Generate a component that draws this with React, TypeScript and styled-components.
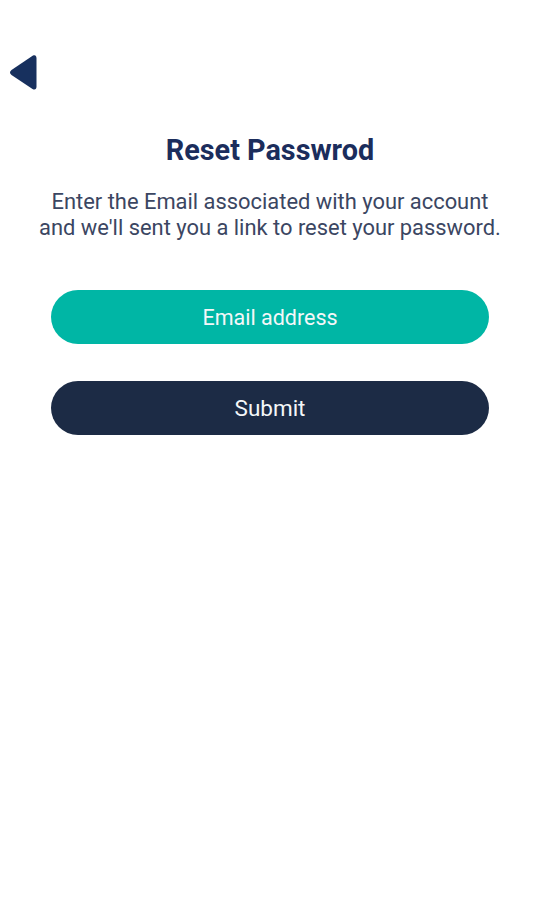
import React from 'react'
import styled, { createGlobalStyle } from 'styled-components'

const GlobalStyle = createGlobalStyle`
  body {
    margin: 0;
    background: #ffffff;
    font-family: Roboto, "Liberation Sans", sans-serif;
  }
`

const Screen = styled.div`
  width: 541px;
  min-height: 900px;
  display: flex;
  flex-direction: column;
`

const TopBar = styled.div`
  padding: 54px 0 0 9px;
  height: 38px;
`

const BackButton = styled.button`
  border: none;
  background: none;
  padding: 0;
  cursor: pointer;
  display: block;
`

const Content = styled.div`
  display: flex;
  flex-direction: column;
  align-items: center;
  padding: 40px 52px 0 51px;
`

const Title = styled.h1`
  margin: 0;
  font-size: 28.8px;
  font-weight: 700;
  color: #1b2d5c;
  line-height: 36px;
`

const Description = styled.p`
  margin: 21px 0 0;
  font-size: 21.9px;
  line-height: 26px;
  color: #3b4662;
  text-align: center;
  width: 500px;
  white-space: nowrap;
`

const PillButton = styled.button<{ $variant: 'teal' | 'navy' }>`
  width: 438px;
  height: 54px;
  border: none;
  border-radius: 27px;
  background: ${({ $variant }) => ($variant === 'teal' ? '#00b6a5' : '#1c2b45')};
  color: #f4f7f8;
  font-family: Roboto, "Liberation Sans", sans-serif;
  font-size: ${({ $variant }) => ($variant === 'teal' ? '21.5px' : '22.5px')};
  margin-top: ${({ $variant }) => ($variant === 'teal' ? '49px' : '37px')};
  cursor: pointer;
`

const BackIcon = () => (
  <svg width="28" height="37" viewBox="0 0 28 37">
    <path
      d="M24 1.5 C26.5 0.5 27.5 2 27.5 4.5 L27.5 32.5 C27.5 35 26 36.5 23.5 35 L2.5 21 C0.5 19.5 0.5 17.5 2.5 16 Z"
      fill="#17305e"
    />
  </svg>
)

const App: React.FC = () => {
  return (
    <>
      <GlobalStyle />
      <Screen>
        <TopBar>
          <BackButton aria-label="Back">
            <BackIcon />
          </BackButton>
        </TopBar>
        <Content>
          <Title>Reset Passwrod</Title>
          <Description>
            Enter the Email associated with your account
            <br />
            and we'll sent you a link to reset your password.
          </Description>
          <PillButton $variant="teal">Email address</PillButton>
          <PillButton $variant="navy">Submit</PillButton>
        </Content>
      </Screen>
    </>
  )
}

export default App
